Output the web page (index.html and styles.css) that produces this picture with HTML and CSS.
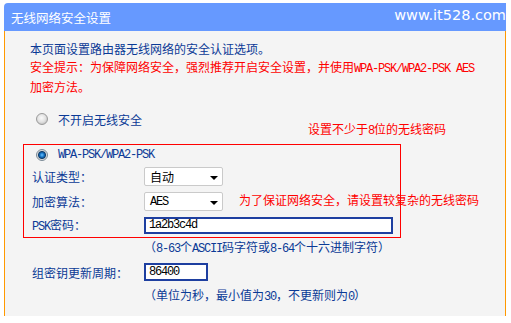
FILE: index.html
```html
<!DOCTYPE html>
<html lang="zh-CN">
<head>
	<meta charset="UTF-8">
	<title>无线网络安全设置</title>
	<link rel="stylesheet" href="styles.css">
</head>
<body>
	<div id="panel">
		<div class="title">
			<span class="title-text">无线网络安全设置</span>
			<span class="site">www.it528.com</span>
		</div>
		<div class="main">
			<p class="intro">本页面设置路由器无线网络的安全认证选项。</p>
			<p class="warn">安全提示：为保障网络安全，强烈推荐开启安全设置，并使用<span class="en">WPA-PSK/WPA2-PSK AES</span><br>加密方法。</p>

			<div class="opt off"><span class="radio"></span>不开启无线安全</div>

			<div class="box">
				<div class="opt"><span class="radio on"></span><span class="en">WPA-PSK/WPA2-PSK</span></div>
				<div class="row"><label>认证类型：</label><span class="sel">自动</span></div>
				<div class="row"><label>加密算法：</label><span class="sel"><span class="en">AES</span></span></div>
				<div class="row last"><label><span class="en">PSK</span>密码：</label><input class="inp wide" type="text" value="1a2b3c4d"></div>
			</div>

			<p class="note">（<span class="en">8-63</span>个<span class="en">ASCII</span>码字符或<span class="en">8-64</span>个十六进制字符）</p>
			<div class="row"><label>组密钥更新周期：</label><input class="inp short" type="text" value="86400"></div>
			<p class="note">（单位为秒，最小值为<span class="en">30</span>，不更新则为<span class="en">0</span>）</p>

			<!-- 红色标注 -->
			<span class="mark mark1">设置不少于<span class="en">8</span>位的无线密码</span>
			<span class="mark mark2">为了保证网络安全，请设置较复杂的无线密码</span>
		</div>
	</div>
</body>
</html>
```

FILE: styles.css
```css
*{
	margin:0;
	padding:0;
}
body{
	background:#fff;
	font-family:"Noto Sans CJK SC", sans-serif;
	font-size:12px;
}
.en{
	font-family:"Liberation Mono", monospace;
	font-size:12px;
	letter-spacing:-1.2px;
}
#panel{
	width:502px;
	margin:3px 0 0 4px;
}
.title{
	height:28px;
	background:#6699ff;
	border-top-left-radius:4px;
	display:flex;
	align-items:center;
	justify-content:space-between;
	padding-left:7px;
	color:#fff;
}
.title-text{
	font-size:12.5px;
}
.site{
	font-family:"DejaVu Sans", sans-serif;
	font-size:14.5px;
	margin-top:-4px;
}
.main{
	position:relative;
	height:285px;
	box-sizing:border-box;
	padding:9px 0 0 18px;
	background:#f4f4f4;
	border-left:1px solid #ff9900;
	border-right:1px solid #ff9900;
	color:#0b3a96;
}
.intro, .warn{
	line-height:18px;
	margin-left:7px;
	white-space:nowrap;
}
.warn{
	color:#ff0000;
}
.opt{
	display:flex;
	align-items:center;
	height:18px;
}
.off{
	margin-top:14px;
	padding-left:13px;
}
.radio{
	width:12px;
	height:12px;
	box-sizing:border-box;
	border-radius:50%;
	border:1px solid #9a9a9a;
	background:radial-gradient(circle at 45% 40%, #fafafa 0, #e2e2e2 4px, #c8c8c8 6px);
	margin-right:10px;
}
.radio.on{
	border-color:#7a8a96;
	background:radial-gradient(circle at 50% 50%, #6cc4ff 0, #1877c9 2px, #0d3d6e 3.5px, #d8d8d8 4.5px, #f2f2f2 6px);
}
.box{
	width:378px;
	margin-top:16px;
	box-sizing:border-box;
	border:1px solid #ff0000;
	padding:0 0 1px 8px;
}
.box .opt{
	height:19px;
	padding-left:4px;
}
.row{
	display:flex;
	align-items:center;
	height:25px;
}
.row label{
	width:112px;
	flex:none;
}
.box .last{
	height:22px;
}
.sel{
	position:relative;
	display:flex;
	align-items:center;
	width:79px;
	height:19px;
	box-sizing:border-box;
	padding-left:5px;
	background:#fff;
	border:1px solid #cacaca;
	border-radius:2px;
	color:#000;
}
.sel::after{
	content:"";
	position:absolute;
	right:4px;
	top:8px;
	border-left:4px solid transparent;
	border-right:4px solid transparent;
	border-top:4px solid #000;
}
.inp{
	box-sizing:border-box;
	height:17px;
	padding-left:3px;
	border:2px solid #1e3fa0;
	background:#fff;
	color:#000;
	font-family:"Liberation Mono", monospace;
	font-size:12px;
	letter-spacing:-1.2px;
	outline:none;
}
.wide{
	width:249px;
}
.short{
	width:64px;
	height:18px;
}
.note{
	line-height:18px;
	margin-left:121px;
	white-space:nowrap;
}
.main > .row{
	height:28px;
	padding-left:9px;
}
.mark{
	position:absolute;
	color:#ff0000;
	line-height:18px;
	white-space:nowrap;
}
.mark1{
	left:303px;
	top:89px;
}
.mark2{
	left:234px;
	top:160px;
}
```
